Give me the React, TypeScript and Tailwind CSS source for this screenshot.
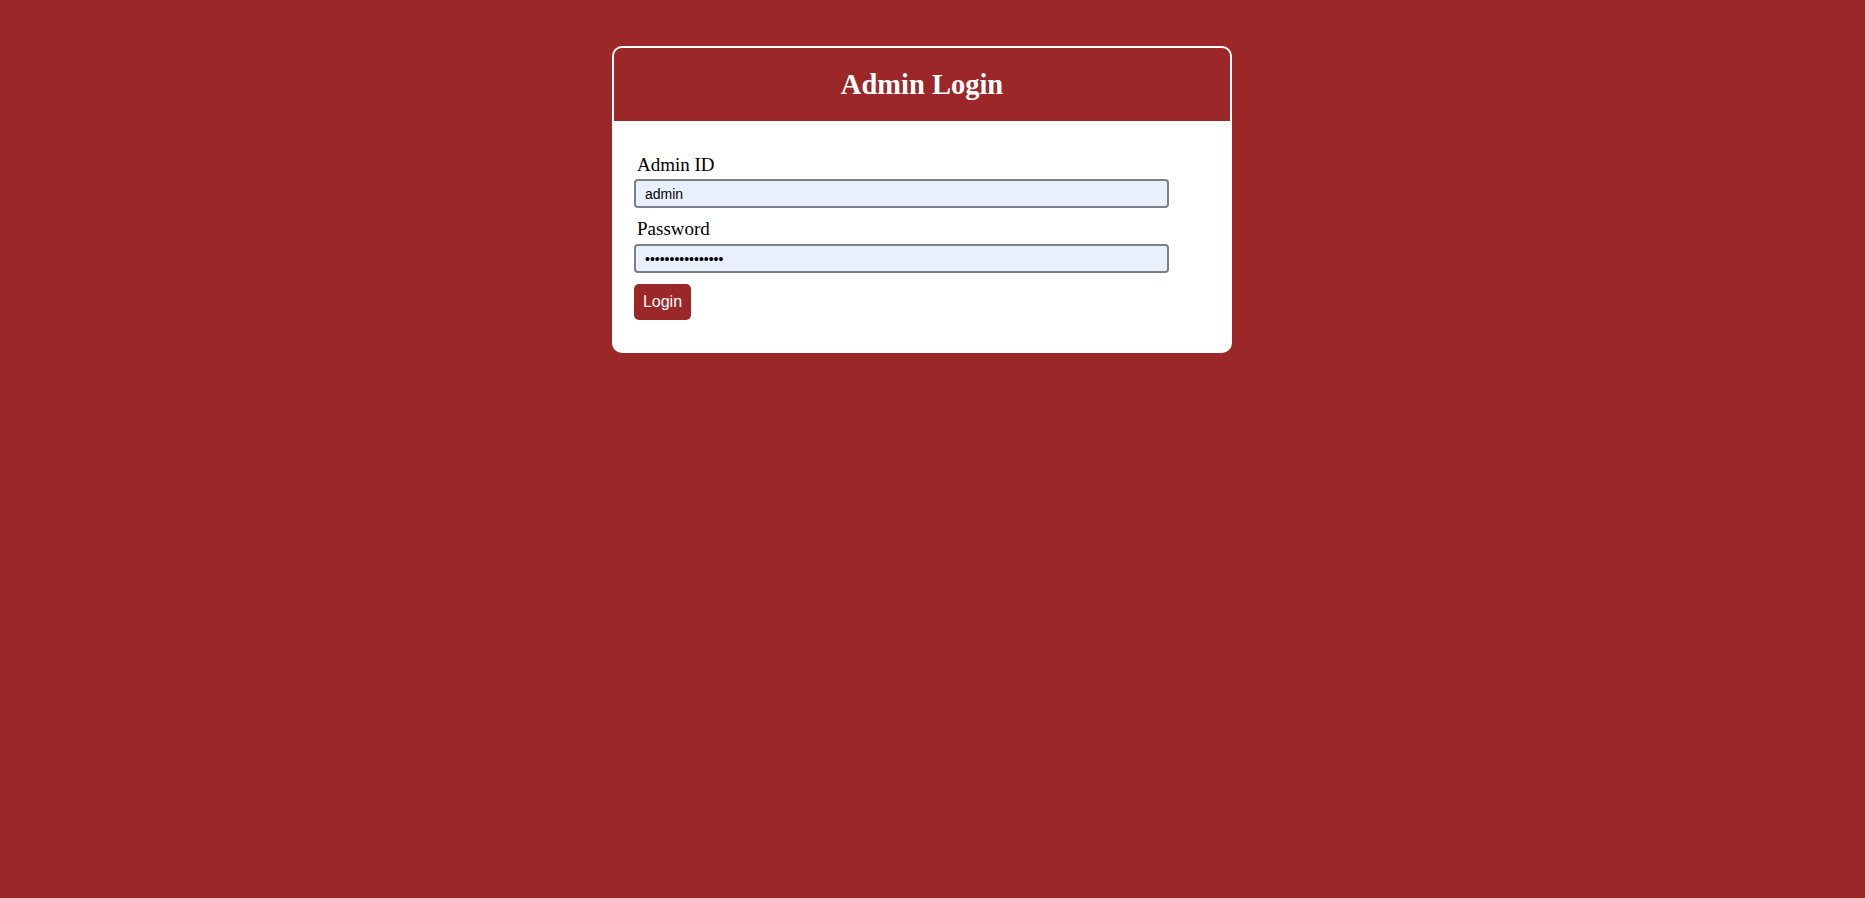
export default function App() {
  return (
    <div className="min-h-screen w-full bg-[#9b2729]">
      <div className="flex justify-center pt-[46px] pr-[21px]">
        <div className="w-[620px] overflow-hidden rounded-[10px] border-2 border-white bg-white">
          <div className="flex h-[73px] items-center justify-center bg-[#9b2729] pt-[2px]">
            <h2 className="font-['Liberation_Serif',serif] text-[28.5px] font-bold leading-none text-white">
              Admin Login
            </h2>
          </div>
          <form className="flex flex-col px-[20px] pt-[33px] pb-[31px]" onSubmit={(e) => e.preventDefault()}>
            <label className="pl-[3px] font-['Liberation_Serif',serif] text-[19px] leading-[22px] text-black">
              Admin ID
            </label>
            <input
              type="text"
              defaultValue="admin"
              readOnly
              className="mt-[3px] h-[29px] w-[535px] rounded-[4px] border-2 border-[#7b7f87] bg-[#e8f0fe] px-[9px] font-['Liberation_Sans',sans-serif] text-[14px] text-black outline-none"
            />
            <label className="mt-[10px] pl-[3px] font-['Liberation_Serif',serif] text-[19px] leading-[22px] text-black">
              Password
            </label>
            <input
              type="password"
              defaultValue="adminpassword123"
              readOnly
              className="mt-[4px] h-[29px] w-[535px] rounded-[4px] border-2 border-[#7b7f87] bg-[#e8f0fe] px-[9px] font-['Liberation_Sans',sans-serif] text-[14px] text-black outline-none"
            />
            <div className="mt-[11px]">
              <button
                type="submit"
                className="h-[36px] w-[57px] rounded-[5px] bg-[#9b2729] font-['Liberation_Sans',sans-serif] text-[16px] text-white"
              >
                Login
              </button>
            </div>
          </form>
        </div>
      </div>
    </div>
  );
}
